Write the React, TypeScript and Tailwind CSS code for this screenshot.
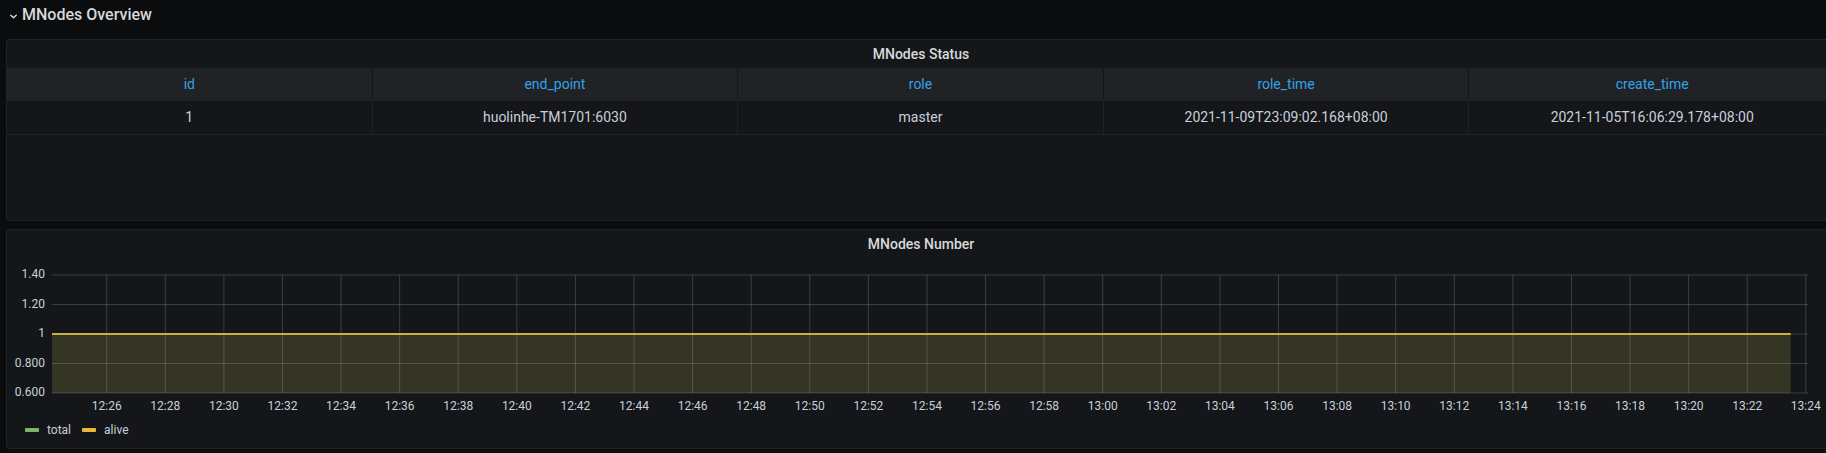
import React from "react";

const cols = ["id", "end_point", "role", "role_time", "create_time"];
const row = ["1", "huolinhe-TM1701:6030", "master", "2021-11-09T23:09:02.168+08:00", "2021-11-05T16:06:29.178+08:00"];

function fmt(i: number) {
  const total = 12 * 60 + 26 + i * 2;
  const h = Math.floor(total / 60);
  const m = total % 60;
  return `${h}:${m.toString().padStart(2, "0")}`;
}

function Chart() {
  const ys = [
    { y: 17, l: "1.40" },
    { y: 46.5, l: "1.20" },
    { y: 76, l: "1" },
    { y: 105.5, l: "0.800" },
    { y: 135, l: "0.600" },
  ];
  const ticks = Array.from({ length: 30 }, (_, i) => 98.7 + i * 58.59);
  return (
    <svg width={1822} height={160} className="block">
      <rect x={44} y={76} width={1782.7 - 44} height={59} fill="#343525" />
      {ys.map((g) => (
        <line key={g.l} x1={44} x2={1800} y1={g.y} y2={g.y} stroke="rgba(255,255,255,0.17)" strokeWidth={1} />
      ))}
      {ticks.map((x, i) => (
        <line key={i} x1={x} x2={x} y1={17} y2={135} stroke="rgba(255,255,255,0.17)" strokeWidth={1} />
      ))}
      <line x1={44} x2={1782.7} y1={76} y2={76} stroke="#c9b23f" strokeWidth={2} />
      {ys.map((g) => (
        <text key={g.l} x={37} y={g.y} textAnchor="end" dominantBaseline="middle" fontSize={12} fill="#c7d0d9" fontFamily="Roboto, sans-serif">
          {g.l}
        </text>
      ))}
      {ticks.map((x, i) => (
        <text key={i} x={x} y={149} textAnchor="middle" dominantBaseline="middle" fontSize={12} fill="#c7d0d9" fontFamily="Roboto, sans-serif">
          {fmt(i)}
        </text>
      ))}
    </svg>
  );
}

export default function App() {
  return (
    <div className="w-[1826px] h-[453px] overflow-hidden bg-[#0b0c0e] text-[#c7d0d9]" style={{ fontFamily: "Roboto, 'Liberation Sans', sans-serif" }}>
      <div className="h-[39px] pt-[5px] pl-[9px]">
        <div className="flex items-center h-[20px] gap-[4px] text-[#d8d9da]">
          <svg width="9" height="9" viewBox="0 0 10 10" className="mt-[2px]">
            <path d="M2 3.5 L5 6.5 L8 3.5" fill="none" stroke="#d8d9da" strokeWidth="1.6" strokeLinecap="round" strokeLinejoin="round" />
          </svg>
          <span className="text-[16px] font-medium leading-[20px]">MNodes Overview</span>
        </div>
      </div>

      <div className="ml-[6px] w-[1830px] h-[182px] border border-[#202226] bg-[#141619] rounded-[3px]">
        <div className="h-[28px] flex items-center justify-center text-[14px] font-medium text-[#d8d9da]">MNodes Status</div>
        <div className="grid grid-cols-5 h-[33px] bg-[#202226]">
          {cols.map((c, i) => (
            <div key={c} className={`flex items-center justify-center text-[14px] text-[#33a2e5] ${i < 4 ? "border-r border-[#141619]" : ""}`}>
              {c}
            </div>
          ))}
        </div>
        <div className="grid grid-cols-5 h-[34px] border-b border-[#202226]">
          {row.map((c, i) => (
            <div key={i} className={`flex items-center justify-center text-[14px] text-[#c7d0d9] ${i < 4 ? "border-r border-[#202226]" : ""}`}>
              {c}
            </div>
          ))}
        </div>
      </div>

      <div className="ml-[6px] mt-[8px] w-[1830px] h-[220px] border border-[#202226] bg-[#141619] rounded-[3px]">
        <div className="h-[28px] flex items-center justify-center text-[14px] font-medium text-[#d8d9da]">MNodes Number</div>
        <div className="pl-[1px]">
          <Chart />
        </div>
        <div className="h-[24px] flex items-center pl-[18px] text-[12px] text-[#c7d0d9]">
          <span className="w-[14px] h-[4px] rounded-[1px] bg-[#7eb26d]" />
          <span className="ml-[8px]">total</span>
          <span className="ml-[11px] w-[14px] h-[4px] rounded-[1px] bg-[#eab839]" />
          <span className="ml-[8px]">alive</span>
        </div>
      </div>
    </div>
  );
}
